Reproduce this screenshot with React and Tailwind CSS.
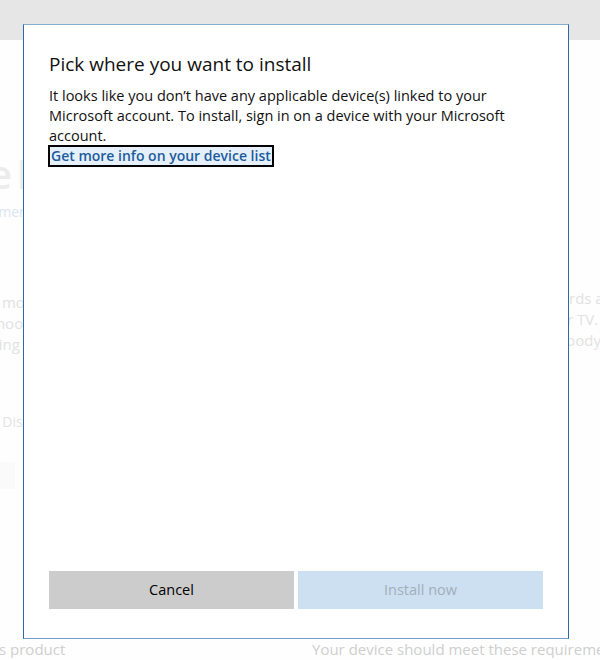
import React from "react";

const font = { fontFamily: '"Open Sans", "Noto Sans", sans-serif' };

function BackgroundPage() {
  return (
    <div className="h-[660px] w-[600px] overflow-hidden bg-[#fefefe] flex flex-col">
      <div className="h-[40px] shrink-0 bg-[#e6e6e6]" />
      <div className="flex flex-1 overflow-hidden">
        {/* left column, mostly hidden under the dialog */}
        <div className="w-[80px] shrink-0 overflow-hidden flex flex-col whitespace-nowrap">
          <div className="mt-[110px] -ml-[11px] text-[40px] leading-[48px] font-semibold tracking-[-3px] text-[#ececec]">e Ma</div>
          <div className="mt-[4px] -ml-[54px] text-[14px] leading-[20px] text-[#d9e6f2]">Management</div>
          <div className="mt-[70px] text-[15px] leading-[21px] text-[#e2e2e2]">
            <div className="-ml-[41px]">Know more</div>
            <div className="-ml-[36px]">at school</div>
            <div className="-ml-[36px]">working set</div>
          </div>
          <div className="mt-[57px] -ml-[40px] text-[14px] leading-[20px] text-[#e4e4e4]">Topic: Disc</div>
          <div className="mt-[30px] w-[15px] h-[27px] bg-[#fafafa]" />
        </div>
        <div className="flex-1" />
        {/* right column */}
        <div className="w-[60px] shrink-0 overflow-hidden flex flex-col whitespace-nowrap">
          <div className="mt-[248px] text-[15px] leading-[21px] text-[#e2e2e2] pl-[29px]">
            <div>rds a</div>
            <div className="-ml-[2px]">r TV.</div>
            <div className="-ml-[3px]">body</div>
          </div>
        </div>
      </div>
      <div className="h-[18px] shrink-0 flex text-[15px] leading-[18px] text-[#cfcfcf] whitespace-nowrap overflow-hidden">
        <div className="w-[312px] shrink-0 overflow-hidden">
          <span className="-ml-[1px]">s product</span>
        </div>
        <div>Your device should meet these requirements</div>
      </div>
      <div className="h-[2px] shrink-0" />
    </div>
  );
}

export default function App() {
  return (
    <div className="relative h-[660px] w-[600px] overflow-hidden" style={font}>
      <BackgroundPage />

      <div className="absolute left-[23px] top-[24px] w-[546px] h-[615px] bg-white border border-[#2b6aa6] border-t-[#86acd2] border-b-[#6f9cc8] flex flex-col pl-[25px] pr-[25px] pt-[25px] pb-[29px]">
        <h1 className="text-[19px] leading-[28px] font-normal text-[#111]">Pick where you want to install</h1>
        <p className="mt-[8px] text-[14.5px] leading-[20px] text-[#111]">
          It looks like you don’t have any applicable device(s) linked to your Microsoft account. To install, sign in on a device with your Microsoft account.
        </p>
        <div className="-mt-[3px] -ml-[1px]">
          <a
            href="#"
            className="inline-block border-2 border-black bg-[#e5f0fb] px-[1px] text-[14px] leading-[18px] font-semibold text-[#1d5c9b] no-underline"
          >
            Get more info on your device list
          </a>
        </div>

        <div className="flex-1" />

        <div className="flex gap-[4px]">
          <button className="flex-1 h-[38px] bg-[#cccccc] text-[14.5px] text-black">Cancel</button>
          <button className="flex-1 h-[38px] bg-[#cce0f2] text-[14.5px] text-[#a3aeb9]" disabled>
            Install now
          </button>
        </div>
      </div>
    </div>
  );
}
